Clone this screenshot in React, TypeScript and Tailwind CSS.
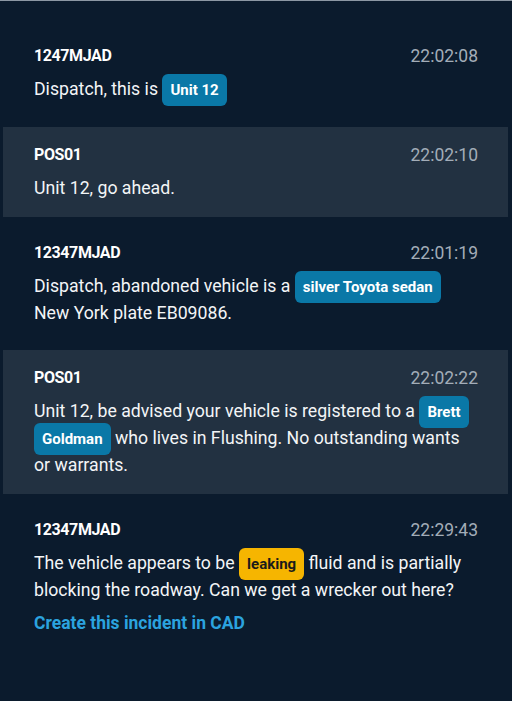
import React from "react";

type Part = string | { chip: string; tone?: "blue" | "yellow" };

const Chip = ({ text, tone = "blue" }: { text: string; tone?: "blue" | "yellow" }) => (
  <span
    className={
      tone === "blue"
        ? "box-decoration-clone rounded-[6px] bg-[#0a78a7] px-[8px] py-[7px] text-[15px] font-bold text-white"
        : "box-decoration-clone rounded-[6px] bg-[#f6b500] px-[8px] py-[7px] text-[15px] font-bold text-[#1b1b1b]"
    }
  >
    {text}
  </span>
);

const Message = ({
  name,
  time,
  parts,
  highlight,
  link,
}: {
  name: string;
  time: string;
  parts: Part[];
  highlight?: boolean;
  link?: string;
}) => (
  <div
    className={
      highlight
        ? "bg-[#223141] pl-[31px] pr-[30px] py-4"
        : "pl-[31px] pr-[30px] py-6"
    }
  >
    <div className="flex items-center justify-between">
      <span className="text-[16px] font-bold leading-[24px] tracking-[-0.4px] text-white">{name}</span>
      <span className="text-[17.5px] leading-[24px] text-[#a3adb8]">{time}</span>
    </div>
    <p className="mt-2 text-[17.7px] leading-[26px] text-[#f3f5f7]">
      {parts.map((p, i) =>
        typeof p === "string" ? (
          <React.Fragment key={i}>{p}</React.Fragment>
        ) : (
          <Chip key={i} text={p.chip} tone={p.tone} />
        )
      )}
    </p>
    {link && (
      <div className="mt-2 text-[17.5px] font-bold leading-[24px] text-[#2ba3df]">{link}</div>
    )}
  </div>
);

export default function App() {
  return (
    <div
      className="min-h-[701px] w-[512px] border-t border-[#8d98a4] bg-[#0b1b2d] pl-[3px] pr-[4px] pt-[19px]"
      style={{ fontFamily: "Roboto, 'Noto Sans', sans-serif" }}
    >
      <Message name="1247MJAD" time="22:02:08" parts={["Dispatch, this is ", { chip: "Unit 12" }]} />
      <Message name="POS01" time="22:02:10" parts={["Unit 12, go ahead."]} highlight />
      <Message
        name="12347MJAD"
        time="22:01:19"
        parts={["Dispatch, abandoned vehicle is a ", { chip: "silver Toyota sedan" }, " New York plate EB09086."]}
      />
      <Message
        name="POS01"
        time="22:02:22"
        highlight
        parts={[
          "Unit 12, be advised your vehicle is registered to a ",
          { chip: "Brett Goldman" },
          "  who lives in Flushing. No outstanding wants or warrants.",
        ]}
      />
      <Message
        name="12347MJAD"
        time="22:29:43"
        parts={[
          "The vehicle appears to be ",
          { chip: "leaking", tone: "yellow" },
          " fluid and is partially blocking the roadway. Can we get a wrecker out here?",
        ]}
        link="Create this incident in CAD"
      />
    </div>
  );
}
